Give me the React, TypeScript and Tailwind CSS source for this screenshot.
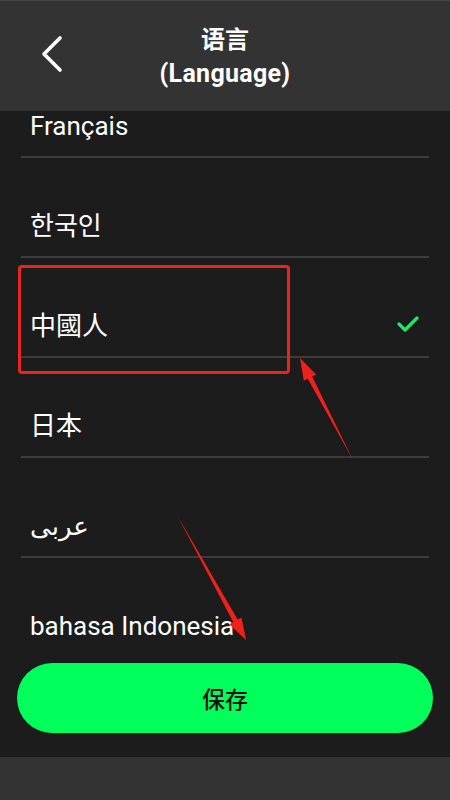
import React from "react";

const FONT = { fontFamily: 'Roboto, "Noto Sans CJK SC", "Noto Sans CJK KR", "DejaVu Sans", sans-serif' };

const rows: { label: string; checked?: boolean; font?: string }[] = [
  { label: "Français" },
  { label: "한국인", font: 'Roboto, "Noto Sans CJK KR", sans-serif' },
  { label: "中國人", checked: true, font: 'Roboto, "Noto Sans CJK TC", sans-serif' },
  { label: "日本", font: 'Roboto, "Noto Sans CJK JP", sans-serif' },
  { label: "عربى", font: '"DejaVu Sans", "Noto Sans", sans-serif' },
  { label: "bahasa Indonesia" },
];

export default function App() {
  return (
    <div className="relative w-[450px] h-[800px] flex flex-col bg-[#1c1c1c] overflow-hidden" style={FONT}>
      {/* Header */}
      <div className="relative h-[111px] shrink-0 bg-[#333333] border-t border-[#444444] flex items-center justify-center">
        <button className="absolute left-[38px] top-[32px] w-[28px] h-[42px] flex items-center justify-center">
          <svg width="28" height="42" viewBox="0 0 28 42">
            <polyline points="22,5 6,21 22,37" fill="none" stroke="#ffffff" strokeWidth="3.6" strokeLinecap="round" strokeLinejoin="round" />
          </svg>
        </button>
        <div className="flex flex-col items-center text-white font-bold text-[25px] leading-[33px] mt-[1px]">
          <span className="text-[24px]">语言</span>
          <span className="tracking-[0.3px]">(Language)</span>
        </div>
      </div>

      {/* List */}
      <div className="flex-1 overflow-hidden">
        <div className="-mt-[53px] flex flex-col">
          {rows.map((r) => (
            <div key={r.label} className="mx-[21px] h-[100px] shrink-0 border-b-2 border-[#3c3c3c] flex items-end pb-[14px] pl-[9px] pr-[10px]">
              <span className="flex-1 text-white text-[26px] leading-[32px]" style={r.font ? { fontFamily: r.font } : undefined}>
                {r.label}
              </span>
              {r.checked && (
                <svg width="22" height="18" viewBox="0 0 22 18" className="mb-[8px]">
                  <polyline points="2,8 8,14 20,2" fill="none" stroke="#22e56c" strokeWidth="3.2" strokeLinecap="round" strokeLinejoin="round" />
                </svg>
              )}
            </div>
          ))}
        </div>
      </div>

      {/* Save button */}
      <div className="shrink-0 px-[17px] pt-[8px] pb-[24px]">
        <button className="w-full h-[70px] rounded-full bg-[#00ff5a] flex items-center justify-center text-[#111111] text-[23px] font-medium" style={{ fontFamily: '"Noto Sans CJK SC", sans-serif' }}>
          保存
        </button>
      </div>

      {/* Bottom bar */}
      <div className="h-[43px] shrink-0 bg-[#333333]" />

      {/* Annotations */}
      <div className="absolute left-[18px] top-[265px] w-[272px] h-[109px] border-[3px] border-[#e8261f] rounded-[4px] pointer-events-none" />
      <svg className="absolute left-0 top-0 pointer-events-none" width="450" height="800" viewBox="0 0 450 800">
        <polygon points="353,460 312.2,376.5 316.2,374.4 300,358 303.8,380.8 307.8,378.7" fill="#f0201c" />
        <polygon points="177,515 233.2,622 229.3,624.2 246,640 241.5,617.4 237.6,619.6" fill="#f0201c" />
      </svg>
    </div>
  );
}
